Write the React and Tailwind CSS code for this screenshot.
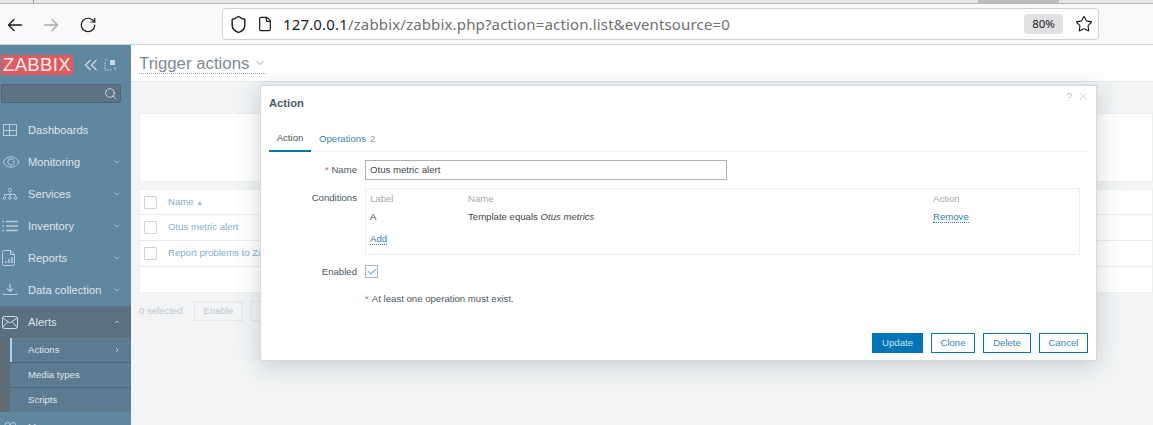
import { RotateCw, Shield, File, Star, ChevronDown, ChevronUp, ChevronRight, Search, X, Check } from 'lucide-react';

const ArrowIcon = ({ flip, className }) => (
  <svg className={className} width="16" height="14" viewBox="0 0 16 14" fill="none" stroke="currentColor" strokeWidth="1.300" strokeLinecap="round" strokeLinejoin="round">
    <path d={flip ? 'M1.500 7h13M9 1.500 14.500 7 9 12.500' : 'M14.500 7h-13M7 1.500 1.500 7 7 12.500'} />
  </svg>
);
const DashIcon = () => (
  <svg width="16" height="14" viewBox="0 0 16 14" fill="none" stroke="currentColor" strokeWidth="1">
    <rect x="1.500" y="1.500" width="13" height="11" />
    <path d="M1.500 7.500h13M7.500 1.500v11" />
  </svg>
);
const EyeIcon = () => (
  <svg width="18" height="14" viewBox="0 0 18 14" fill="none" stroke="currentColor" strokeWidth="1">
    <path d="M1 7c2-3.400 4.800-5.200 8-5.200S15 3.600 17 7c-2 3.400-4.800 5.200-8 5.200S3 10.400 1 7z" />
    <circle cx="9" cy="7" r="3.200" />
  </svg>
);
const TreeIcon = () => (
  <svg width="16" height="14" viewBox="0 0 16 14" fill="none" stroke="currentColor" strokeWidth="1">
    <rect x="6.500" y="1.500" width="3" height="3" rx="1" />
    <path d="M8 4.500v3M2.500 9.500v-2h11v2M8 7.500v2" />
    <circle cx="2.500" cy="11" r="1.300" /><circle cx="8" cy="11" r="1.300" /><circle cx="13.500" cy="11" r="1.300" />
  </svg>
);
const ListIcon = () => (
  <svg width="16" height="14" viewBox="0 0 16 14" fill="none" stroke="currentColor" strokeWidth="1.300">
    <path d="M4 2.500h12M4 7h12M4 11.500h12M.5 2.500h1.500M.5 7h1.500M.5 11.500h1.500" />
  </svg>
);
const ReportIcon = () => (
  <svg width="14" height="16" viewBox="0 0 14 16" fill="none" stroke="currentColor" strokeWidth="1">
    <path d="M2.500.5h6l4 4v9a2 2 0 0 1-2 2h-8a2 2 0 0 1-2-2v-11a2 2 0 0 1 2-2zM8.500.5v4h4" />
    <path d="M4 13v-2M7 13V9M10 13V7" strokeWidth="1.500" />
  </svg>
);
const ImportIcon = () => (
  <svg width="16" height="14" viewBox="0 0 16 14" fill="none" stroke="currentColor" strokeWidth="1.200">
    <path d="M8 1v7M5 5.500 8 8.500l3-3M1 11.500h14M1 11.500v-1M15 11.500v-1" />
  </svg>
);
const MailIcon = () => (
  <svg width="16" height="13" viewBox="0 0 16 13" fill="none" stroke="currentColor" strokeWidth="1">
    <rect x=".5" y=".5" width="15" height="12" rx="2" />
    <path d="m1 2 7 5 7-5M1 11l5-5.500M15 11l-5-5.500" />
  </svg>
);
const UsersIcon = () => (
  <svg width="16" height="14" viewBox="0 0 16 14" fill="none" stroke="currentColor" strokeWidth="1">
    <circle cx="5.500" cy="4" r="2.500" /><circle cx="11" cy="4" r="2.500" />
    <path d="M1 12c0-3 2-4.500 4.500-4.500S10 9 10 12M11 7.500c2.400 0 4 1.500 4 4.500" />
  </svg>
);
const CollapseIcon = () => (
  <svg className="ml-[6px]" width="12" height="12" viewBox="0 0 12 12" fill="none" stroke="#c9d8e2" strokeWidth="1">
    <path d="M1 3.500v7.500h7.500" strokeDasharray="1.500 1" />
    <path d="M1 1h3M11 11V8" strokeDasharray="1.500 1" />
    <rect x="6" y="1" width="5" height="5" fill="#c9d8e2" stroke="none" />
  </svg>
);
const DoubleChevron = () => (
  <svg className="ml-[11px]" width="14" height="12" viewBox="0 0 14 12" fill="none" stroke="#d3e0e8" strokeWidth="1.200">
    <path d="M6.500 1 1.500 6l5 5M12.500 1l-5 5 5 5" />
  </svg>
);

const menu = [
  { label: 'Dashboards', icon: <DashIcon /> },
  { label: 'Monitoring', icon: <EyeIcon />, arrow: true },
  { label: 'Services', icon: <TreeIcon />, arrow: true },
  { label: 'Inventory', icon: <ListIcon />, arrow: true },
  { label: 'Reports', icon: <ReportIcon />, arrow: true },
  { label: 'Data collection', icon: <ImportIcon />, arrow: true },
];

const Browser = () => (
  <div className="h-[45px] shrink-0 flex flex-col bg-[#f9f9fb] border-b border-[#cfcfd8]">
    <div className="h-[4px] shrink-0 flex bg-[#e6e6e6] border-b border-[#b5b5b5]">
      <div className="ml-[33px] w-px bg-[#9a9a9a]" />
      <div className="ml-[944px] w-[81px] bg-[#bdbdbd]" />
    </div>
    <div className="flex-1 flex items-center text-[#1b1b1f]">
      <ArrowIcon className="ml-[7px] mt-[1px]" />
      <ArrowIcon flip className="ml-[20px] mt-[1px] text-[#a9a9ad]" />
      <RotateCw className="ml-[20px] mt-[1px] w-[18px] h-[18px]" strokeWidth={1.600} />
      <div className="ml-[125px] w-[877px] h-[32px] flex items-center bg-white border border-[#cfcfd8] rounded-[4px]">
        <Shield className="ml-[6px] w-[19px] h-[19px]" strokeWidth={1.800} />
        <File className="ml-[9px] w-[16px] h-[16px]" strokeWidth={1.800} />
        <span className="ml-[10px] font-['Noto_Sans',sans-serif] text-[15px] tracking-[0.150px] text-[#6f6f73] whitespace-nowrap">
          <span className="text-[#1b1b1f]">127.0.0.1</span>/zabbix/zabbix.php?action=action.list&amp;eventsource=0
        </span>
        <span className="ml-auto w-[39px] h-[20px] flex items-center justify-center rounded-[4px] bg-[#e0e0e2] font-['Noto_Sans',sans-serif] text-[11.500px]">80%</span>
        <Star className="ml-[12px] mr-[5px] w-[18px] h-[18px]" strokeWidth={1.500} />
      </div>
    </div>
  </div>
);

const Sidebar = () => (
  <aside className="w-[131px] shrink-0 bg-[#5f879f] text-[#dde6ec] flex flex-col">
    <div className="h-[39px] shrink-0 flex items-center pl-[1px]">
      <span className="bg-[#e05a5f] text-[#fbeeee] text-[18.500px] leading-[20px] tracking-[0.350px] px-[2px] mt-[1px]">ZABBIX</span>
      <DoubleChevron />
      <CollapseIcon />
    </div>
    <div className="mx-[1px] h-[19px] shrink-0 w-[120px] bg-[#5d7384] border border-[#4f6575] rounded-[2px] flex items-center justify-end pr-[3px]">
      <Search className="w-[13px] h-[13px] text-[#cfdbe3]" strokeWidth={1.800} />
    </div>
    <nav className="mt-[11px] text-[11.200px]">
      {menu.map((m) => (
        <div key={m.label} className="h-[32px] flex items-center">
          <span className="w-[28px] pl-[2px] flex justify-start text-[#bccdd9]">{m.icon}</span>
          <span>{m.label}</span>
          {m.arrow && <ChevronDown className="ml-auto mr-[10px] w-[8px] h-[8px]" strokeWidth={2} />}
        </div>
      ))}
      <div className="bg-[#5a6f7f]">
        <div className="h-[32px] flex items-center">
          <span className="w-[28px] pl-[2px] flex text-[#cfdbe3]"><MailIcon /></span>
          <span>Alerts</span>
          <ChevronUp className="ml-auto mr-[10px] w-[8px] h-[8px]" strokeWidth={2} />
        </div>
        <div className="text-[9.600px] pl-[10px] bg-[#5e6d76]">
          <div className="h-[24px] flex items-center pl-[18px] bg-[#5d7b90] border-l-2 border-[#a9d3f2]">
            <span className="-ml-[2px]">Actions</span>
            <ChevronRight className="ml-auto mr-[10px] w-[8px] h-[8px]" strokeWidth={2} />
          </div>
          <div className="h-[25px] flex items-center pl-[18px] bg-[#5d7b90] border-t border-[#4f6575]">Media types</div>
          <div className="h-[25px] flex items-center pl-[18px] bg-[#5d7b90] border-t border-[#4f6575]">Scripts</div>
        </div>
      </div>
      <div className="h-[32px] flex items-center">
        <span className="w-[28px] pl-[2px] flex text-[#bccdd9]"><UsersIcon /></span>
        <span>Users</span>
      </div>
    </nav>
  </aside>
);

const TableRow = ({ children, first }) => (
  <div className={`${first ? 'h-[25px]' : 'h-[26px]'} flex items-center pl-[4px] border-b border-[#e9ecee]`}>
    <span className="w-[13px] h-[13px] border border-[#cfd4d7] rounded-[1px] shrink-0" />
    <span className="ml-[11px] text-[#7fb0cc] whitespace-nowrap">{children}</span>
  </div>
);

const Main = () => (
  <main className="flex-1 min-w-0 bg-[#f2f4f5] flex flex-col text-[9.600px]">
    <div className="h-[37px] shrink-0 bg-white border-b border-[#e6e9eb] flex items-center pl-[8px]">
      <span className="mt-[1px] flex items-center border-b border-dotted border-[#9aa3a9] text-[#7e8a92] text-[16.800px] leading-[19px]">
        Trigger actions
        <ChevronDown className="ml-[5px] w-[12px] h-[12px]" strokeWidth={1.500} />
      </span>
    </div>
    <div className="pl-[8px]">
      <div className="h-[31px]" />
      <div className="h-[69px] bg-white border border-[#eceff0]" />
      <div className="mt-[7px] h-[104px] bg-white border border-[#eceff0]">
        <TableRow first>
          Name <span className="text-[7px] text-[#a6b4bc]">▲</span>
        </TableRow>
        <TableRow>Otus metric alert</TableRow>
        <TableRow>Report problems to Zabbix administrators</TableRow>
      </div>
      <div className="mt-[8px] flex items-center text-[#c0c6ca]">
        <span className="w-[55px]">0 selected</span>
        <span className="w-[49px] h-[20px] flex items-center justify-center border border-[#e4e7e9]">Enable</span>
        <span className="ml-[8px] w-[49px] h-[20px] flex items-center justify-center border border-[#e4e7e9]">Disable</span>
      </div>
    </div>
  </main>
);

const Modal = () => (
  <div className="absolute left-[260px] top-[85px] w-[837px] h-[276px] bg-white border border-[#d3dadf] shadow-[0_4px_22px_rgba(60,80,95,0.25)] text-[9.600px] text-[#4b565e] flex flex-col">
    <div className="absolute right-[6px] top-[4px] flex items-center gap-[5px] text-[#c4c9cc]">
      <span className="text-[11px] leading-[12px]">?</span>
      <X className="w-[13px] h-[13px]" strokeWidth={1.400} />
    </div>
    <div className="pl-[8px] pt-[9px] h-[41px] shrink-0 text-[11.200px] font-bold text-[#4b5a65]">Action</div>
    <div className="ml-[8px] mr-[8px] h-[25px] shrink-0 flex border-b border-[#eceff0]">
      <div className="w-[42px] h-[25px] flex items-center justify-center border-b-2 border-[#0a75ad] text-[#4b565e]">Action</div>
      <div className="ml-[8px] flex items-center">
        <span className="text-[#3a87b3]">Operations</span>
        <span className="ml-[4px] text-[#8f979c]">2</span>
      </div>
    </div>
    <div className="mt-[8px] h-[20px] shrink-0 flex items-center">
      <span className="w-[96px] text-right"><span className="text-[#d9534f]">*</span> Name</span>
      <div className="ml-[8px] w-[362px] h-[20px] border border-[#acb3b8] flex items-center pl-[4px] text-[#3e464c]">Otus metric alert</div>
    </div>
    <div className="mt-[8px] shrink-0 flex items-start">
      <span className="w-[96px] text-right pt-[3px]">Conditions</span>
      <div className="ml-[8px] w-[715px] h-[67px] border border-[#eceff0] px-[4px] pt-[2px]">
        <div className="h-[17px] flex items-center text-[#a3aab0]">
          <span className="w-[98px]">Label</span>
          <span className="w-[465px]">Name</span>
          <span>Action</span>
        </div>
        <div className="h-[18px] flex items-center text-[#3e464c]">
          <span className="w-[98px]">A</span>
          <span className="w-[465px]">Template equals <i>Otus metrics</i></span>
          <span className="text-[#2f7fae] border-b border-dotted border-[#2f7fae] leading-[11px]">Remove</span>
        </div>
        <div className="h-[25px] flex items-center">
          <span className="text-[#2f7fae] border-b border-dotted border-[#2f7fae] leading-[11px]">Add</span>
        </div>
      </div>
    </div>
    <div className="mt-[10px] h-[13px] shrink-0 flex items-center">
      <span className="w-[96px] text-right pt-[1px]">Enabled</span>
      <span className="ml-[8px] w-[13px] h-[13px] border border-[#acb3b8] flex items-center justify-center">
        <Check className="w-[10px] h-[10px] text-[#2f7fae]" strokeWidth={2.400} />
      </span>
    </div>
    <div className="mt-[14px] ml-[104px] shrink-0"><span className="text-[#d9534f] mr-[1px]">*</span> At least one operation must exist.</div>
    <div className="mt-auto mb-[7px] mr-[8px] flex justify-end gap-[8px] text-[#3a87b3]">
      <span className="w-[51px] h-[20px] flex items-center justify-center bg-[#0275b8] text-[#cfe4f1]">Update</span>
      <span className="w-[44px] h-[20px] flex items-center justify-center border border-[#0275b8]">Clone</span>
      <span className="w-[48px] h-[20px] flex items-center justify-center border border-[#0275b8]">Delete</span>
      <span className="w-[49px] h-[20px] flex items-center justify-center border border-[#0275b8]">Cancel</span>
    </div>
  </div>
);

export default function App() {
  return (
    <div className="relative w-[1153px] h-[425px] overflow-hidden flex flex-col font-['Liberation_Sans',Arial,sans-serif]">
      <Browser />
      <div className="flex-1 flex min-h-0">
        <Sidebar />
        <Main />
      </div>
      <Modal />
    </div>
  );
}
